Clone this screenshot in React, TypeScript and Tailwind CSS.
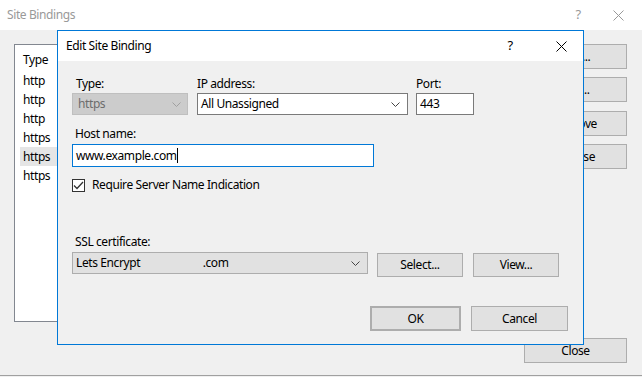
import React from "react";

const font = { fontFamily: '"Segoe UI", "Noto Sans", "Liberation Sans", sans-serif' };

function Chevron({ color = "#444" }: { color?: string }) {
  return (
    <svg width="9" height="5" viewBox="0 0 9 5" className="shrink-0">
      <polyline points="0.5,0.5 4.5,4.5 8.5,0.5" fill="none" stroke={color} strokeWidth="1" />
    </svg>
  );
}

function CloseX({ color = "#000" }: { color?: string }) {
  return (
    <svg width="11" height="11" viewBox="0 0 11 11">
      <path d="M0.5 0.5 L10.5 10.5 M10.5 0.5 L0.5 10.5" stroke={color} strokeWidth="1" />
    </svg>
  );
}

function WinButton({ children, className = "" }: { children: React.ReactNode; className?: string }) {
  return (
    <div
      className={`flex items-center justify-center bg-[#e1e1e1] border border-[#adadad] text-[12px] text-black ${className}`}
    >
      {children}
    </div>
  );
}

export default function App() {
  const rows = ["http", "http", "http", "https", "https", "https"];
  return (
    <div className="relative w-[642px] h-[377px] overflow-hidden bg-[#f0f0f0] select-none tracking-[-0.4px]" style={font}>
      {/* background window: Site Bindings */}
      <div className="h-[30px] bg-white flex items-center pl-[7px] text-[12px] text-[#999999]">
        <span className="flex-1">Site Bindings</span>
        <span className="w-[36px] text-center text-[13px]">?</span>
        <span className="w-[46px] flex justify-center pr-[2px]">
          <CloseX color="#999999" />
        </span>
      </div>
      <div className="flex h-[346px] border-b border-[#a0a0a0] pt-[14px] pl-[14px] pr-[15px]">
        <div className="w-[500px] h-[278px] bg-white border border-[#828790] pl-[8px] pt-[3px] text-[12px]">
          <div className="h-[23px] leading-[23px]">Type</div>
          {rows.map((r, i) => (
            <div key={i} className={`h-[19px] leading-[19px] w-[37px] -ml-[3px] pl-[3px] ${i === 4 ? "bg-[#e5e5e5]" : ""}`}>
              {r}
            </div>
          ))}
        </div>
        <div className="flex-1 flex flex-col items-end">
          <WinButton className="w-[103px] h-[25px] mb-[8px]">Add...</WinButton>
          <WinButton className="w-[103px] h-[25px] mb-[9px]">Edit...</WinButton>
          <WinButton className="w-[103px] h-[25px] mb-[8px]">Remove</WinButton>
          <WinButton className="w-[103px] h-[25px]">Browse</WinButton>
          <div className="flex-1" />
          <WinButton className="w-[103px] h-[25px] mb-[12px]">Close</WinButton>
        </div>
      </div>

      {/* foreground dialog: Edit Site Binding */}
      <div className="absolute left-[57px] top-[30px] w-[527px] h-[315px] border border-[#0078d7] bg-[#f0f0f0] flex flex-col">
        <div className="h-[30px] bg-white flex items-center pl-[8px] text-[12px] text-black">
          <span className="flex-1">Edit Site Binding</span>
          <span className="w-[30px] text-center text-[13px] mr-[10px]">?</span>
          <span className="w-[44px] flex justify-center ml-[4px]">
            <CloseX />
          </span>
        </div>

        <div className="flex-1 pl-[14px] pt-[14px] text-[12px] text-black">
          <div className="flex">
            <div className="flex flex-col w-[116px] mr-[9px]">
              <span className="pl-[4px] h-[17px] leading-[17px] text-[#000]">Type:</span>
              <div className="mt-[1px] h-[22px] bg-[#cccccc] border border-[#bfbfbf] flex items-center pl-[5px] pr-[6px] text-[#6d6d6d]">
                <span className="flex-1">https</span>
                <Chevron color="#a0a0a0" />
              </div>
            </div>
            <div className="flex flex-col w-[211px] mr-[8px]">
              <span className="h-[17px] leading-[17px]">IP address:</span>
              <div className="mt-[1px] h-[22px] bg-white border border-[#7a7a7a] flex items-center pl-[3px] pr-[7px]">
                <span className="flex-1">All Unassigned</span>
                <Chevron />
              </div>
            </div>
            <div className="flex flex-col w-[58px]">
              <span className="h-[17px] leading-[17px]">Port:</span>
              <div className="mt-[1px] h-[22px] bg-white border border-[#7a7a7a] flex items-center pl-[3px]">443</div>
            </div>
          </div>

          <div className="mt-[10px] pl-[3px] h-[18px] leading-[18px]">Host name:</div>
          <div className="mt-[1px] w-[302px] h-[23px] bg-white border border-[#0078d7] flex items-center pl-[3px]">
            <span>www.example.com</span>
            <span className="w-[1px] h-[15px] bg-black" />
          </div>

          <div className="mt-[10px] flex items-center h-[16px]">
            <div className="w-[13px] h-[13px] border border-[#333333] bg-white flex items-center justify-center">
              <svg width="11" height="9" viewBox="0 0 11 9">
                <polyline points="1,4.5 4,7.5 10,1" fill="none" stroke="#333" strokeWidth="1.3" />
              </svg>
            </div>
            <span className="ml-[7px]">Require Server Name Indication</span>
          </div>

          <div className="mt-[40px] pl-[3px] h-[18px] leading-[18px]">SSL certificate:</div>
          <div className="flex mt-[1px]">
            <div className="w-[296px] h-[22px] bg-[#e1e1e1] border border-[#adadad] flex items-center pl-[3px] pr-[7px]">
              <span className="flex-1 whitespace-pre">{"Lets Encrypt                       .com"}</span>
              <Chevron />
            </div>
            <WinButton className="ml-[9px] mt-[1px] w-[86px] h-[24px]">Select...</WinButton>
            <WinButton className="ml-[10px] mt-[1px] w-[86px] h-[24px]">View...</WinButton>
          </div>

          <div className="flex mt-[29px] pl-[298px]">
            <WinButton className="w-[91px] h-[25px] border-2 border-[#0078d7]">OK</WinButton>
            <WinButton className="ml-[10px] w-[97px] h-[25px]">Cancel</WinButton>
          </div>
        </div>
      </div>
    </div>
  );
}
